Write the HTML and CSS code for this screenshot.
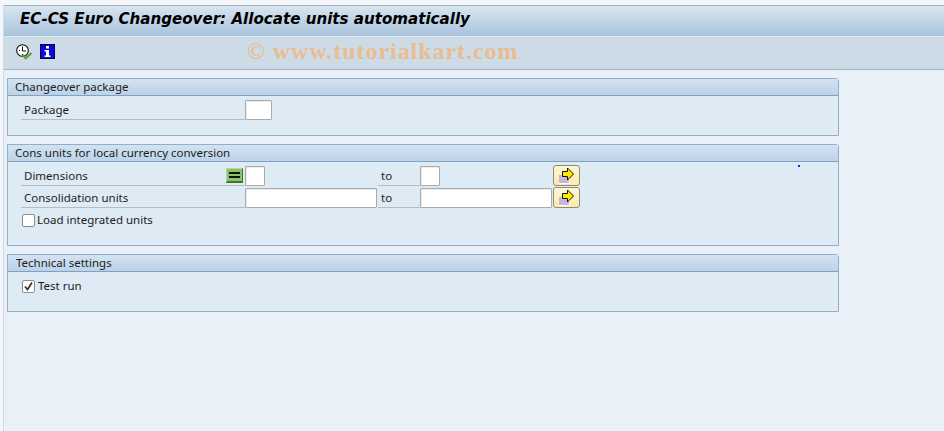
FILE: index.html
```html
<!DOCTYPE html>
<html lang="en">
<head>
<meta charset="utf-8">
<title>EC-CS Euro Changeover</title>
<link rel="stylesheet" href="styles.css">
</head>
<body>
<div class="app">
  <header class="titlebar"><h1 class="title">EC-CS Euro Changeover: Allocate units automatically</h1></header>
  <div class="toolbar">
    <svg class="tool-icon" width="17" height="16" viewBox="0 0 17 16">
      <circle cx="6.5" cy="6.500" r="5.800" fill="#fff" stroke="#111" stroke-width="1.100"/>
      <path d="M6.500 2.500V7H10M3 6.500h1M6.500 10v1" fill="none" stroke="#111" stroke-width="1"/>
      <path d="M6.500 11l3.200 3.200L15.500 9" fill="none" stroke="#5aa032" stroke-width="2.200"/>
    </svg>
    <svg class="tool-icon info" width="15" height="15" viewBox="0 0 15 15">
      <rect x=".5" y=".5" width="14" height="14" fill="#0a0ad8" stroke="#00005a"/>
      <path d="M6 2h3v2.500H6zM4.500 6H9v5.500h1.500V13h-6v-1.500H6V7.500H4.500z" fill="#fff"/>
    </svg>
    <span class="watermark">© www.tutorialkart.com</span>
  </div>
  <main class="content">
    <section class="group group-package">
      <h2 class="group-title">Changeover package</h2>
      <div class="fields">
        <div class="label">Package</div>
        <div class="cell"><span class="input input-3"></span></div>
      </div>
    </section>
    <section class="group group-units">
      <h2 class="group-title">Cons units for local currency conversion</h2>
      <div class="fields">
        <div class="label">Dimensions<span class="equal"><i></i></span></div>
        <div class="cell"><span class="input input-2"></span></div>
        <div class="label to">to</div>
        <div class="cell"><span class="input input-2"></span></div>
        <div class="cell"><button class="more" type="button"><svg width="19" height="17" viewBox="0 0 19 17"><rect x="2" y="8" width="11" height="9" fill="#fff"/><rect x="2" y="8" width="10" height="8" fill="#c9b6dd"/><path d="M5.500 4.500h5V1l6 6-6 6V9.500h-5z" fill="#ffe800" stroke="#111"/></svg></button></div>
        <div class="label">Consolidation units</div>
        <div class="cell"><span class="input input-18"></span></div>
        <div class="label to">to</div>
        <div class="cell"><span class="input input-18"></span></div>
        <div class="cell"><button class="more" type="button"><svg width="19" height="17" viewBox="0 0 19 17"><rect x="2" y="8" width="11" height="9" fill="#fff"/><rect x="2" y="8" width="10" height="8" fill="#c9b6dd"/><path d="M5.500 4.500h5V1l6 6-6 6V9.500h-5z" fill="#ffe800" stroke="#111"/></svg></button></div>
      </div>
      <div class="check-row"><span class="check"></span><span class="check-label">Load integrated units</span></div>
    </section>
    <section class="group group-tech">
      <h2 class="group-title title-tech">Technical settings</h2>
      <div class="check-row check-row-tech"><span class="check"><svg width="11" height="11" viewBox="0 0 11 11"><path d="M2 5.500l2.500 3L9 1.500" fill="none" stroke="#333" stroke-width="1.700"/></svg></span><span class="check-label">Test run</span></div>
    </section>
    <span class="dot"></span>
  </main>
</div>
</body>
</html>
```
FILE: styles.css
```css
html, body { margin: 0; height: 100%; }
body {
  width: 944px; height: 431px; overflow: hidden; background: #f3f6fb;
  font-family: "Noto Sans", "DejaVu Sans", sans-serif; font-size: 11.5px; color: #1c1c1c;
}
.app {
  margin: 5px 0 0 3px; height: 426px; border-left: 1px solid #cfdbe8;
  display: flex; flex-direction: column; background: #e9f0f7;
}
.titlebar {
  height: 30px; border-top: 1px solid #a4aeb9; border-bottom: 1px solid #e0e9f1;
  background: linear-gradient(#d9e5f0, #a9c3dc); display: flex; align-items: center;
}
.title {
  margin: 0 0 0 16px; font-family: "DejaVu Sans", sans-serif; font-size: 15.1px; font-weight: bold;
  font-style: italic; color: #000; white-space: nowrap; position: relative; top: -2px;
}
.toolbar {
  height: 25px; background: #cddbe7; border-bottom: 1px solid #a1b5c9;
  display: flex; align-items: flex-start; padding: 7px 0 0 12px; gap: 7px; position: relative;
}
.tool-icon { display: block; }
.watermark {
  position: absolute; left: 243px; top: 1px; font-family: "Liberation Serif", serif; font-weight: bold;
  font-size: 24px; letter-spacing: 0.95px; color: #e9bd8f; white-space: nowrap;
}
.content { padding: 8px 0 0 3px; display: flex; flex-direction: column; gap: 8px; position: relative; }
.group {
  width: 832px; box-sizing: border-box; border: 1px solid #92aecb; border-radius: 0 3px 0 0;
  background: #deeaf4; margin: 0;
}
.group-package { height: 58px; }
.group-units { height: 102px; }
.group-tech { height: 58px; }
.group-title {
  margin: 0; height: 17px; box-sizing: border-box; padding-left: 7px; line-height: 15px;
  font-size: 11.5px; font-weight: normal; color: #1c1c1c; white-space: nowrap;
  background: linear-gradient(#d3e3f2, #bcd2e8); border-bottom: 1px solid #85a0be;
}
.title-tech { padding-left: 8px; }
.fields {
  display: grid; grid-template-columns: 224px 133px 42px 133px 27px; grid-auto-rows: 22px;
  margin: 3px 0 0 13px;
}
.label {
  height: 18px; margin-top: 2px; padding-left: 3px; line-height: 18px;
  border-bottom: 1px solid #b5bcc4; position: relative; white-space: nowrap;
}
.cell { display: flex; align-items: flex-start; }
.input {
  display: block; height: 20px; box-sizing: border-box; background: #fff;
  border: 1px solid #a8abae; box-shadow: inset 1px 1px 0 #ececec; border-radius: 1px; margin-top: 1px;
}
.input-3 { width: 27px; }
.input-2 { width: 20px; }
.input-18 { width: 132px; }
.equal {
  position: absolute; right: 2px; top: 1px; width: 17px; height: 15px; box-sizing: border-box;
  background: #8fc06c; border: 1px solid #b8d6a2; border-bottom: 2px solid #3d7a1e; border-right-color: #3d7a1e;
  display: flex; align-items: center; justify-content: center;
}
.equal i { display: block; width: 11px; height: 6px; border-top: 2px solid #0a1a05; border-bottom: 2px solid #0a1a05; box-sizing: border-box; }
.more {
  width: 27px; height: 21px; padding: 0; border: 1px solid #8c8c80; border-radius: 3px; margin: 0;
  background: linear-gradient(#fff6d2, #fde9a9); display: flex; align-items: center; justify-content: center;
}
.more svg { display: block; }
.check-row { display: flex; align-items: flex-start; height: 14px; margin: 5px 0 0 14px; }
.check-row-tech { margin-top: 8px; }
.check {
  width: 13px; height: 13px; box-sizing: border-box; background: #fff; border: 1px solid #8d8d8d;
  border-radius: 2px; display: flex; align-items: center; justify-content: center; flex: none;
}
.check svg { display: block; }
.check-label { margin-left: 2px; line-height: 12px; white-space: nowrap; }
.check-row-tech .check-label { margin-left: 3px; }
.dot { position: absolute; left: 794px; top: 95px; width: 2px; height: 2px; background: #2222dd; }
```
